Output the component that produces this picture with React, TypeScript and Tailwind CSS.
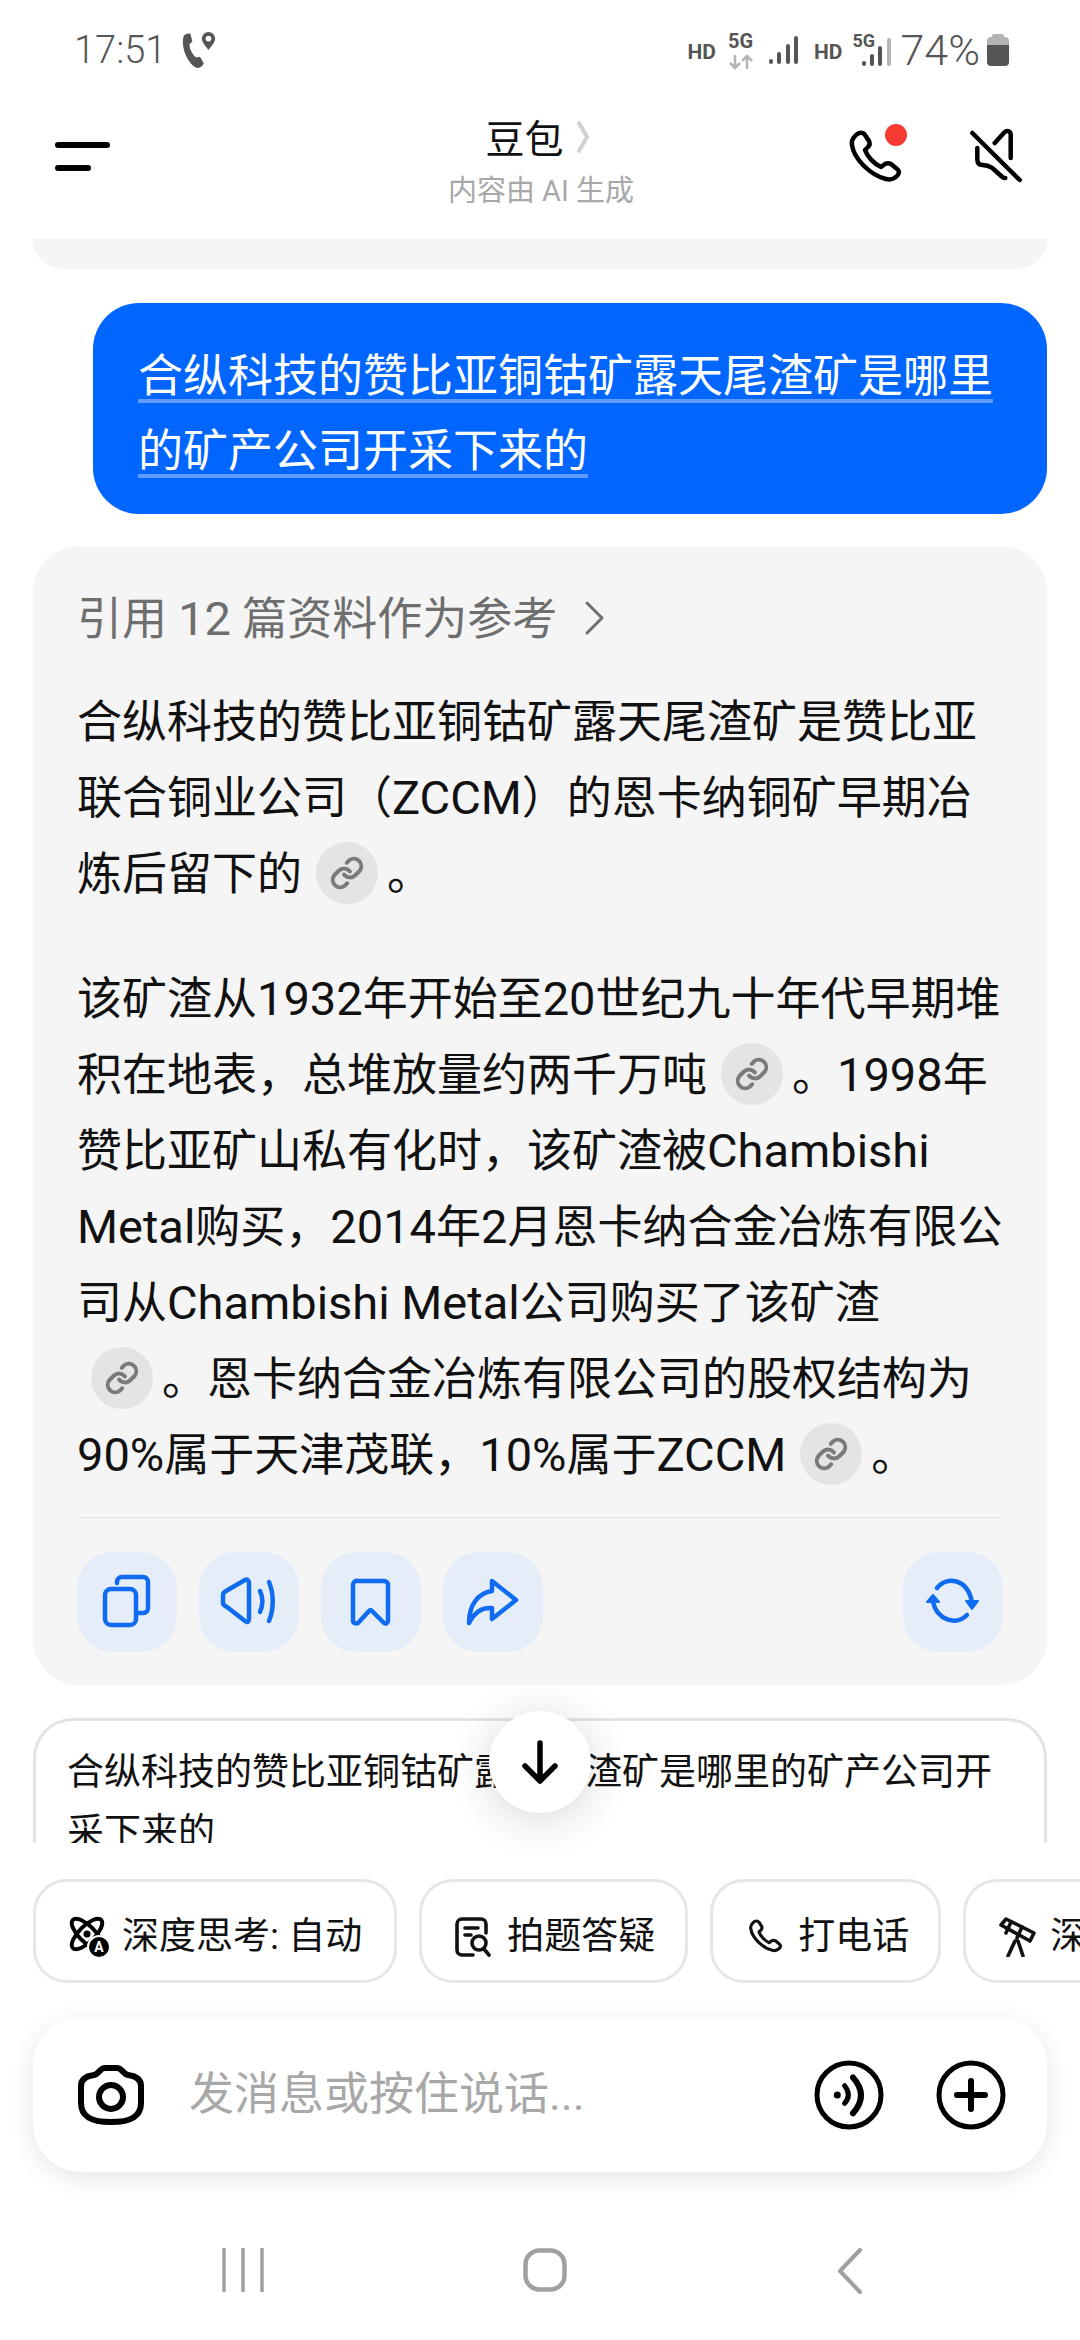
import React from "react";

const Link = () => (
  <span className="inline-flex w-[62px] h-[62px] ml-[14px] mr-[9px] rounded-full bg-[#e4e4e4] items-center justify-center align-middle -mt-[10px]">
    <svg width="36" height="36" viewBox="0 0 24 24" fill="none" stroke="#7a7a7a" strokeWidth="2.6" strokeLinecap="round" strokeLinejoin="round">
      <path d="M10 13a5 5 0 0 0 7.5.5l3-3a5 5 0 0 0-7-7l-1.7 1.7" />
      <path d="M14 11a5 5 0 0 0-7.5-.5l-3 3a5 5 0 0 0 7 7l1.7-1.7" />
    </svg>
  </span>
);

const L = ({ children }: { children: React.ReactNode }) => <span className="text-[47px] leading-[0]">{children}</span>;

const ActionBtn = ({ children }: { children: React.ReactNode }) => (
  <div className="w-[100px] h-[100px] rounded-[36px] bg-[#e5edf8] shrink-0">
    <svg width="100" height="100" viewBox="0 0 100 100" fill="none" stroke="#0f6cf0" strokeWidth="4.5" strokeLinecap="round" strokeLinejoin="round">
      {children}
    </svg>
  </div>
);

const Chip = ({ icon, text, cls }: { icon: React.ReactNode; text: string; cls: string }) => (
  <div className={`flex items-center shrink-0 h-[104px] pt-[12px] border-[3px] border-[#e6e6e6] rounded-[34px] bg-white text-[37px] text-[#111] ${cls}`}>
    {icon}
    <span className="whitespace-nowrap">{text}</span>
  </div>
);

export default function App() {
  return (
    <div className="w-[1080px] h-[2340px] bg-white overflow-hidden flex flex-col relative font-['Roboto','Noto_Sans_CJK_SC',sans-serif]">
      {/* Status bar */}
      <div className="h-[96px] shrink-0 flex items-center pl-[74px] pr-[71px] pt-[4px] text-[#555]">
        <span className="text-[38px] font-light leading-none">17:51</span>
        <svg className="ml-[14px]" width="38" height="40" viewBox="0 0 40 40" fill="#555">
          <path d="M4 5c2-2 5-3 7-2l2 8-3 3c0 5 3 11 7 14l4-1 4 7c-1 3-4 5-7 5C9 36 0 17 4 5z" />
          <path fillRule="evenodd" d="M30 1a7 7 0 0 1 7 7c0 4-4 8-7 12-3-4-7-8-7-12a7 7 0 0 1 7-7zm0 4a3 3 0 1 0 0 6 3 3 0 0 0 0-6z" />
        </svg>
        <div className="flex-1" />
        <span className="text-[21px] font-bold leading-none mt-[4px]">HD</span>
        <div className="flex flex-col items-center ml-[12px] w-[25px]">
          <span className="text-[20px] font-bold leading-none">5G</span>
          <svg width="26" height="16" viewBox="0 0 26 16" fill="none" stroke="#b4b4b4" strokeWidth="2.5" className="mt-[3px]">
            <path d="M7 1v13M2 9l5 5 5-5M19 15V2M14 7l5-5 5 5" />
          </svg>
        </div>
        <svg className="ml-[16px]" width="30" height="30" viewBox="0 0 30 30" fill="#555">
          <rect x="0" y="24" width="4" height="5" rx="2" />
          <rect x="8" y="17" width="4" height="12" rx="2" />
          <rect x="17" y="9" width="4" height="20" rx="2" />
          <rect x="25" y="1" width="4" height="28" rx="2" />
        </svg>
        <span className="text-[21px] font-bold leading-none mt-[4px] ml-[15px]">HD</span>
        <div className="relative w-[38px] h-[34px] ml-[10px] mr-[10px]">
          <span className="absolute left-0 -top-[1px] text-[18px] font-bold leading-none">5G</span>
          <svg className="absolute left-[9px] top-[4px]" width="30" height="30" viewBox="0 0 30 30" fill="#555">
            <rect x="0" y="24" width="4" height="5" rx="2" />
            <rect x="8" y="17" width="4" height="12" rx="2" />
            <rect x="16" y="9" width="4" height="20" rx="2" />
            <rect x="25" y="1" width="4" height="28" rx="2" fill="#b4b4b4" />
          </svg>
        </div>
        <span className="text-[43px] font-light leading-none">74%</span>
        <svg className="ml-[7px]" width="22" height="32" viewBox="0 0 22 32">
          <path d="M7 0h8a2 2 0 0 1 2 2v1h1a4 4 0 0 1 4 4v4H0V7a4 4 0 0 1 4-4h1V2a2 2 0 0 1 2-2z" fill="#b4b4b4" />
          <path d="M0 11h22v17a4 4 0 0 1-4 4H4a4 4 0 0 1-4-4z" fill="#555" />
        </svg>
      </div>

      {/* Header */}
      <div className="h-[143px] shrink-0 grid grid-cols-[1fr_auto_1fr] items-center pl-[55px] pr-[53px]">
        <div className="flex flex-col gap-[17px] w-[55px] -mt-[22px]">
          <div className="h-[6px] w-[55px] bg-black rounded-full" />
          <div className="h-[6px] w-[36px] bg-black rounded-full" />
        </div>
        <div className="flex flex-col items-center -mt-[14px]">
          <div className="flex items-center h-[50px] mr-[7px]">
            <span className="text-[39px] leading-none text-[#111]">豆包</span>
            <svg className="ml-[12px] -mt-[6px]" width="14" height="34" viewBox="0 0 14 34" fill="none" stroke="#d2d2d2" strokeWidth="4" strokeLinecap="round">
              <path d="M3 3l8 14-8 14" />
            </svg>
          </div>
          <span className="text-[29px] leading-none text-[#a8a8a8] mt-[12px]">内容由 AI 生成</span>
        </div>
        <div className="flex justify-end items-center -mt-[20px]">
          <div className="relative w-[60px] h-[60px] -ml-[2px]">
            <svg width="60" height="60" viewBox="0 0 60 60" fill="none" stroke="#000" strokeWidth="4.5" strokeLinejoin="round">
              <path d="M10 7c3-3 7-3 9 0l4 6c1 2 1 4-1 6l-3 3c2 6 9 14 16 17l4-3c2-1 4-1 6 0l6 5c3 2 2 5 0 7-3 3-7 4-11 3C24 47 8 31 6 17c-1-4 1-7 4-10z" />
            </svg>
            <div className="absolute left-[39px] -top-[4px] w-[22px] h-[22px] rounded-full bg-[#f53a32]" />
          </div>
          <svg className="ml-[61px]" width="60" height="60" viewBox="0 0 60 60" fill="none" stroke="#000" strokeWidth="4.5" strokeLinecap="round" strokeLinejoin="round">
            <path d="M5.3 5l47.4 47" />
            <path d="M27.7 15l10-11c3-2 6-1 6 3v23" />
            <path d="M10.3 20v11c0 4 2 6 5 6 4 0 7 1 10 3l10 9c1 1 2 1 3 1" />
          </svg>
        </div>
      </div>

      {/* Chat */}
      <div className="h-[1604px] shrink-0 overflow-hidden px-[33px] flex flex-col">
        <div className="h-[30px] shrink-0 bg-[#f5f5f5] rounded-b-[40px]" />
        <div className="mt-[34px] ml-[60px] h-[211px] shrink-0 rounded-[46px] bg-[#0066ff] pt-[36px] pl-[45px] text-[45px] leading-[75px] text-white whitespace-nowrap">
          <span className="underline decoration-[4px] decoration-[#5e9dff] underline-offset-[7px]">
            合纵科技的赞比亚铜钴矿露天尾渣矿是哪里
            <br />
            的矿产公司开采下来的
          </span>
        </div>
        <div className="mt-[32px] shrink-0 rounded-[46px] bg-[#f5f5f5] pt-[36px] pb-[33px] pl-[44px] pr-[44px]">
          <div className="flex items-center h-[76px] text-[45px] text-[#6e6e6e] whitespace-nowrap">
            <span>引用 <L>12</L> 篇资料作为参考</span>
            <svg className="ml-[27px] -mt-[4px]" width="22" height="36" viewBox="0 0 22 36" fill="none" stroke="#6e6e6e" strokeWidth="3" strokeLinecap="round" strokeLinejoin="round">
              <path d="M3 3l15 15L3 33" />
            </svg>
          </div>
          <div className="mt-[27px] text-[45px] leading-[76px] text-[#111] whitespace-nowrap">
            <p>
              合纵科技的赞比亚铜钴矿露天尾渣矿是赞比亚
              <br />
              联合铜业公司（<L>ZCCM</L>）的恩卡纳铜矿早期冶
              <br />
              炼后留下的
              <Link />。
            </p>
            <p className="mt-[49px]">
              该矿渣从<L>1932</L>年开始至<L>20</L>世纪九十年代早期堆
              <br />
              积在地表，总堆放量约两千万吨
              <Link />。<L>1998</L>年
              <br />
              赞比亚矿山私有化时，该矿渣被<L>Chambishi</L>
              <br />
              <L>Metal</L>购买，<L>2014</L>年<L>2</L>月恩卡纳合金冶炼有限公
              <br />
              司从<L>Chambishi Metal</L>公司购买了该矿渣
              <br />
              <Link />。恩卡纳合金冶炼有限公司的股权结构为
              <br />
              <L>90%</L>属于天津茂联，<L>10%</L>属于<L>ZCCM</L>
              <Link />。
            </p>
          </div>
          <div className="mt-[23px] h-[1px] bg-[#e2e2e2]" />
          <div className="mt-[34px] flex gap-[22px]">
            <ActionBtn>
              <rect x="28" y="37" width="31" height="36" rx="6" />
              <path d="M40 31v-1a5 5 0 0 1 5-5h21a5 5 0 0 1 5 5v26a5 5 0 0 1-5 5h-6" />
            </ActionBtn>
            <ActionBtn>
              <path d="M24 44c0-2 1-3 3-4l19-11c2-1 4 0 4 3v36c0 3-2 4-4 2L28 56c-2-1-4-2-4-4z" transform="translate(0 -1)" />
              <path d="M61 39c3 6 3 14 0 21" />
              <path d="M70 30c5 12 5 27 0 39" />
            </ActionBtn>
            <ActionBtn>
              <path d="M37 29h26a4 4 0 0 1 4 4v36c0 2-2 3-4 2L51 59c-1-1-2-1-3 0L37 71c-2 1-5 0-5-2V33a4 4 0 0 1 5-4z" />
            </ActionBtn>
            <ActionBtn>
              <path d="M49 29L73 48L49 67V56C38 55 31 61 26 71C26 53 35 41 49 39Z" />
            </ActionBtn>
            <div className="flex-1" />
            <ActionBtn>
              <path d="M34 36C44 24 64 26 69 50" />
              <path d="M64 63C53 74 34 68 30 50" />
              <path d="M63 49h12l-6 8z" fill="#0f6cf0" strokeWidth="2" />
              <path d="M24 50h12l-6-7z" fill="#0f6cf0" strokeWidth="2" />
            </ActionBtn>
          </div>
        </div>
        <div className="mt-[33px] h-[180px] shrink-0 rounded-[40px] border-[3px] border-[#e4e4e4] pt-[22px] px-[31px] text-[37px] leading-[60px] text-[#111] whitespace-nowrap">
          合纵科技的赞比亚铜钴矿露天尾渣矿是哪里的矿产公司开
          <br />
          采下来的
        </div>
      </div>

      {/* Scroll button */}
      <div className="absolute left-[489px] top-[1711px] w-[102px] h-[102px] rounded-full bg-white shadow-[0_6px_44px_rgba(0,0,0,0.16)] flex items-center justify-center">
        <svg width="44" height="48" viewBox="0 0 44 48" fill="none" stroke="#000" strokeWidth="5.5" strokeLinecap="round" strokeLinejoin="round">
          <path d="M22 5v38M7 28l15 15 15-15" />
        </svg>
      </div>

      {/* Chips */}
      <div className="mt-[36px] shrink-0 flex gap-[22px] pl-[33px] overflow-hidden">
        <Chip
          cls="gap-[11px] pl-[33px] pr-[32px]"
          text="深度思考: 自动"
          icon={
            <svg width="42" height="42" viewBox="0 0 42 42" fill="none" stroke="#000" strokeWidth="4">
              <ellipse cx="18" cy="18" rx="8" ry="20" transform="rotate(-45 18 18)" />
              <ellipse cx="18" cy="18" rx="8" ry="20" transform="rotate(45 18 18)" />
              <circle cx="18" cy="18" r="3.5" fill="#000" stroke="none" />
              <circle cx="30" cy="31" r="11" fill="#000" stroke="#fff" strokeWidth="2" />
              <text x="30" y="36" textAnchor="middle" fontSize="14" fontWeight="700" fill="#fff" stroke="none" fontFamily="Roboto, sans-serif">A</text>
            </svg>
          }
        />
        <Chip
          cls="gap-[16px] pl-[33px] pr-[30px]"
          text="拍题答疑"
          icon={
            <svg width="36" height="40" viewBox="0 0 36 40" fill="none" stroke="#111" strokeWidth="3.6" strokeLinecap="round" strokeLinejoin="round">
              <path d="M31 16V7a5 5 0 0 0-5-5H7a5 5 0 0 0-5 5v26a5 5 0 0 0 5 5h11" />
              <path d="M10 11h13M10 18h6" />
              <circle cx="24" cy="26" r="7" />
              <path d="M29 32l5 6" />
            </svg>
          }
        />
        <Chip
          cls="gap-[13px] pl-[34px] pr-[29px]"
          text="打电话"
          icon={
            <svg width="38" height="38" viewBox="0 0 60 60" fill="none" stroke="#111" strokeWidth="5" strokeLinejoin="round">
              <path d="M10 7c3-3 7-3 9 0l4 6c1 2 1 4-1 6l-3 3c2 6 9 14 16 17l4-3c2-1 4-1 6 0l6 5c3 2 2 5 0 7-3 3-7 4-11 3C24 47 8 31 6 17c-1-4 1-7 4-10z" />
            </svg>
          }
        />
        <Chip
          cls="gap-[12px] pl-[32px] pr-[31px]"
          text="深入研究"
          icon={
            <svg width="40" height="40" viewBox="0 0 40 40" fill="none" stroke="#111" strokeWidth="3.6" strokeLinecap="round" strokeLinejoin="round">
              <path d="M3 8l5-6 28 14-4 8z" />
              <path d="M13 5l-5 11M24 10l-5 11" />
              <path d="M17 24l-7 15M20 24l5 15" />
            </svg>
          }
        />
      </div>

      {/* Input bar */}
      <div className="mt-[34px] mx-[33px] h-[155px] shrink-0 rounded-[48px] bg-white shadow-[0_6px_24px_rgba(0,0,0,0.1)] flex items-center pl-[45px] pr-[41px]">
        <svg width="66" height="60" viewBox="0 0 66 60" fill="none" stroke="#000" strokeWidth="6" strokeLinejoin="round">
          <path d="M16 10C21 9 22 3 27 3H39C44 3 45 9 50 10C58 11 63 14 63 21V38C63 52 52 57 33 57C14 57 3 52 3 38V21C3 14 8 11 16 10Z" />
          <circle cx="33" cy="32" r="12" />
        </svg>
        <span className="ml-[45px] flex-1 text-[45px] leading-none text-[#a8a8a8] whitespace-nowrap">发消息或按住说话...</span>
        <svg width="70" height="70" viewBox="0 0 70 70" fill="none" stroke="#000" strokeWidth="5" strokeLinecap="round">
          <circle cx="35" cy="35" r="32" />
          <circle cx="23.3" cy="35" r="3.5" fill="#000" stroke="none" />
          <path d="M30.6 25.7Q38 35 30.6 43.4" />
          <path d="M39 17.4Q55 35 39 53.3" strokeWidth="6" />
        </svg>
        <svg className="ml-[52px]" width="70" height="70" viewBox="0 0 70 70" fill="none" stroke="#000" strokeWidth="5" strokeLinecap="round">
          <circle cx="35" cy="35" r="32" />
          <path d="M21 35h28M35 21v28" strokeWidth="6" />
        </svg>
      </div>

      {/* Nav */}
      <div className="mt-[76px] shrink-0 flex items-start">
        <svg className="ml-[222px]" width="42" height="44" viewBox="0 0 42 44" fill="none" stroke="#a0a0a0" strokeWidth="3.5">
          <path d="M2 0v44M21 0v44M40 0v44" />
        </svg>
        <svg className="ml-[259px]" width="44" height="44" viewBox="0 0 44 44" fill="none" stroke="#a0a0a0" strokeWidth="4.5">
          <rect x="2.5" y="2.5" width="39" height="39" rx="14" />
        </svg>
        <svg className="ml-[270px]" width="26" height="46" viewBox="0 0 26 46" fill="none" stroke="#a0a0a0" strokeWidth="4" strokeLinecap="round" strokeLinejoin="round">
          <path d="M23 2L3 23l20 21" />
        </svg>
      </div>
    </div>
  );
}
